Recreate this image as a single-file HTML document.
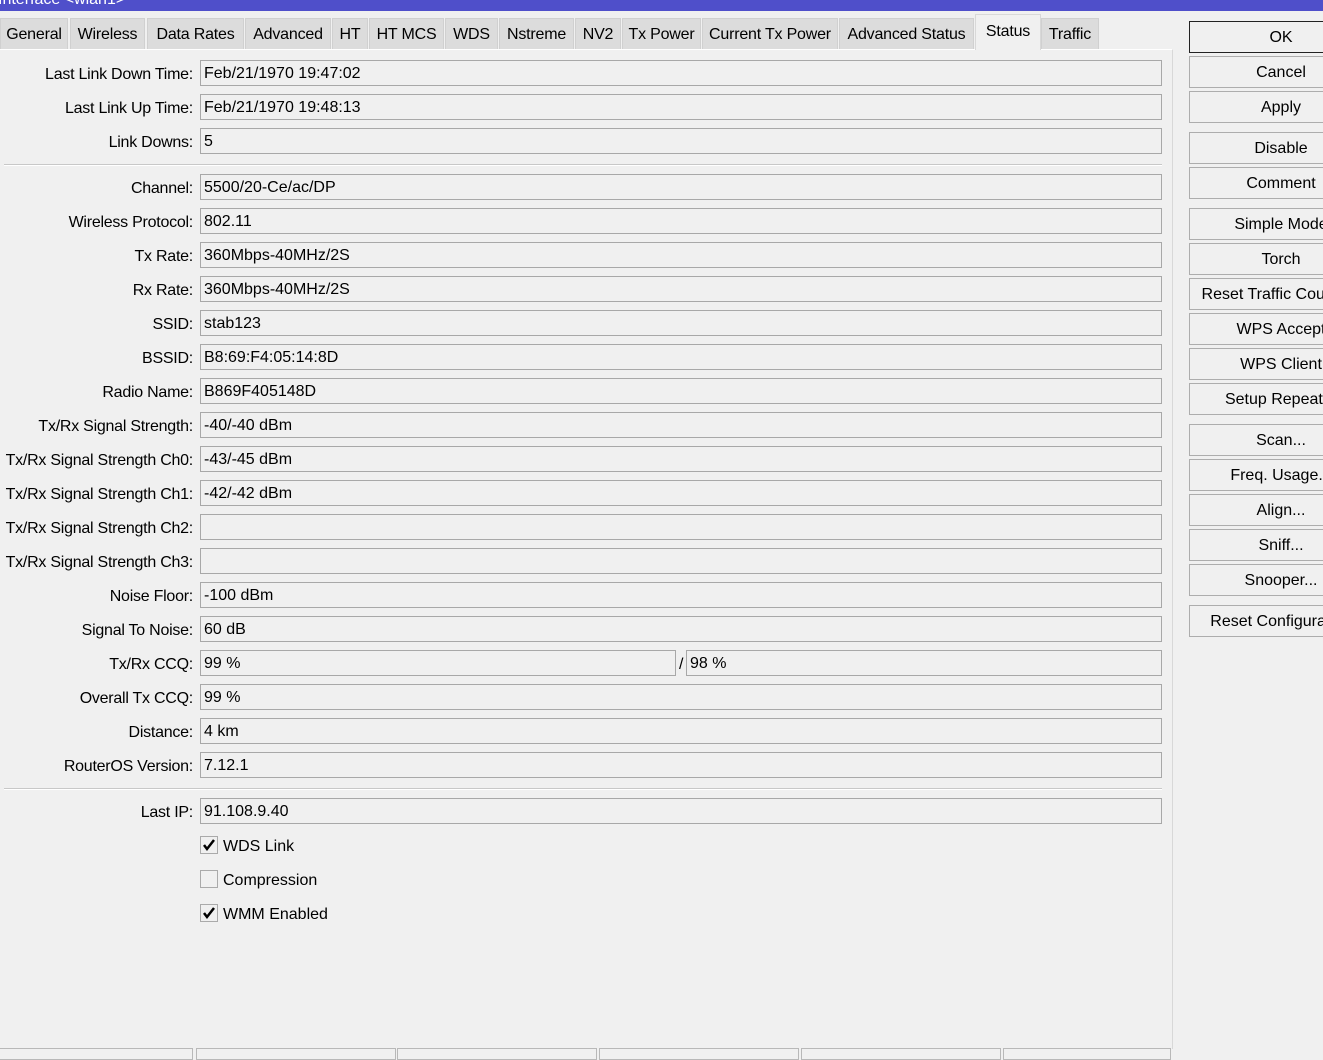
<!DOCTYPE html>
<html><head><style>
*{box-sizing:border-box;margin:0;padding:0}
body{width:1323px;height:1058px;background:#f0f0f0;font-family:"Liberation Sans",Arial,sans-serif;font-size:16px;color:#000;position:relative;overflow:hidden}
.title{position:absolute;left:0;top:0;width:1323px;height:11px;background:#4f4fca;color:#fff;overflow:hidden}
.title span{position:absolute;left:-2px;top:-9px;font-size:16px}
.tab{position:absolute;top:18px;height:31px;background:#dcdcdc;border:1px solid #d0d0d0;border-bottom:none;padding-top:7px;text-align:center;white-space:nowrap;letter-spacing:-0.2px}
.tab.sel{top:14px;height:36px;background:#f0f0f0;border-color:#d8d8d8;padding-top:8px}
.panel{position:absolute;left:0;top:49px;width:1173px;height:1000px;border-right:1px solid #d8d8d8;border-top:1px solid #fff}
.lbl{position:absolute;right:1130px;width:200px;text-align:right;white-space:nowrap;letter-spacing:-0.25px;margin-top:1px}
.fld{position:absolute;left:200px;width:962px;height:26px;border:1px solid #a8a8a8;padding:4px 0 0 3px;white-space:nowrap}
.sep{position:absolute;left:4px;width:1158px;height:2px;border-top:1px solid #c8c8c8;border-bottom:1px solid #fff}
.btn{position:absolute;left:1189px;width:184px;height:32px;border:1px solid #adadad;background:#f0f0f0;text-align:center;padding-top:7px;white-space:nowrap}
.btn.ok{border:1px solid #222}
.cb{position:absolute;left:200px;width:18px;height:18px;border:1px solid #aaa;background:#f0f0f0}
.cbl{position:absolute;left:223px;margin-top:1px}
.status{position:absolute;top:1048px;height:12px;border:1px solid #b8b8b8}
</style></head><body>
<div class="title"><span>Interface &lt;wlan1&gt;</span></div>
<div class="panel"></div>
<div class="tab" style="left:0;width:68px">General</div>
<div class="tab" style="left:70px;width:75px">Wireless</div>
<div class="tab" style="left:147px;width:97px">Data Rates</div>
<div class="tab" style="left:245px;width:86px">Advanced</div>
<div class="tab" style="left:332px;width:36px">HT</div>
<div class="tab" style="left:369px;width:75px">HT MCS</div>
<div class="tab" style="left:445px;width:53px">WDS</div>
<div class="tab" style="left:499px;width:75px">Nstreme</div>
<div class="tab" style="left:575px;width:46px">NV2</div>
<div class="tab" style="left:622px;width:79px">Tx Power</div>
<div class="tab" style="left:702px;width:136px">Current Tx Power</div>
<div class="tab" style="left:839px;width:135px">Advanced Status</div>
<div class="tab sel" style="left:975px;width:66px">Status</div>
<div class="tab" style="left:1041px;width:58px">Traffic</div>

<div class="lbl" style="top:65px">Last Link Down Time:</div><div class="fld" style="top:60px">Feb/21/1970 19:47:02</div>
<div class="lbl" style="top:99px">Last Link Up Time:</div><div class="fld" style="top:94px">Feb/21/1970 19:48:13</div>
<div class="lbl" style="top:133px">Link Downs:</div><div class="fld" style="top:128px">5</div>
<div class="sep" style="top:164px"></div>
<div class="lbl" style="top:179px">Channel:</div><div class="fld" style="top:174px">5500/20-Ce/ac/DP</div>
<div class="lbl" style="top:213px">Wireless Protocol:</div><div class="fld" style="top:208px">802.11</div>
<div class="lbl" style="top:247px">Tx Rate:</div><div class="fld" style="top:242px">360Mbps-40MHz/2S</div>
<div class="lbl" style="top:281px">Rx Rate:</div><div class="fld" style="top:276px">360Mbps-40MHz/2S</div>
<div class="lbl" style="top:315px">SSID:</div><div class="fld" style="top:310px">stab123</div>
<div class="lbl" style="top:349px">BSSID:</div><div class="fld" style="top:344px">B8:69:F4:05:14:8D</div>
<div class="lbl" style="top:383px">Radio Name:</div><div class="fld" style="top:378px">B869F405148D</div>
<div class="lbl" style="top:417px">Tx/Rx Signal Strength:</div><div class="fld" style="top:412px">-40/-40 dBm</div>
<div class="lbl" style="top:451px">Tx/Rx Signal Strength Ch0:</div><div class="fld" style="top:446px">-43/-45 dBm</div>
<div class="lbl" style="top:485px">Tx/Rx Signal Strength Ch1:</div><div class="fld" style="top:480px">-42/-42 dBm</div>
<div class="lbl" style="top:519px">Tx/Rx Signal Strength Ch2:</div><div class="fld" style="top:514px"></div>
<div class="lbl" style="top:553px">Tx/Rx Signal Strength Ch3:</div><div class="fld" style="top:548px"></div>
<div class="lbl" style="top:587px">Noise Floor:</div><div class="fld" style="top:582px">-100 dBm</div>
<div class="lbl" style="top:621px">Signal To Noise:</div><div class="fld" style="top:616px">60 dB</div>
<div class="lbl" style="top:655px">Tx/Rx CCQ:</div><div class="fld" style="top:650px;width:476px">99 %</div>
<div style="position:absolute;left:679px;top:656px">/</div><div class="fld" style="top:650px;left:686px;width:476px">98 %</div>
<div class="lbl" style="top:689px">Overall Tx CCQ:</div><div class="fld" style="top:684px">99 %</div>
<div class="lbl" style="top:723px">Distance:</div><div class="fld" style="top:718px">4 km</div>
<div class="lbl" style="top:757px">RouterOS Version:</div><div class="fld" style="top:752px">7.12.1</div>
<div class="sep" style="top:788px"></div>
<div class="lbl" style="top:803px">Last IP:</div><div class="fld" style="top:798px">91.108.9.40</div>

<div class="cb" style="top:836px"><svg width="16" height="16"><path d="M3 8 L6 12 L13 3" stroke="#000" stroke-width="2.5" fill="none"/></svg></div><div class="cbl" style="top:837px">WDS Link</div>
<div class="cb" style="top:870px"></div><div class="cbl" style="top:871px">Compression</div>
<div class="cb" style="top:904px"><svg width="16" height="16"><path d="M3 8 L6 12 L13 3" stroke="#000" stroke-width="2.5" fill="none"/></svg></div><div class="cbl" style="top:905px">WMM Enabled</div>

<div class="btn ok" style="top:21px">OK</div>
<div class="btn" style="top:56px">Cancel</div>
<div class="btn" style="top:91px">Apply</div>
<div class="btn" style="top:132px">Disable</div>
<div class="btn" style="top:167px">Comment</div>
<div class="btn" style="top:208px">Simple Mode</div>
<div class="btn" style="top:243px">Torch</div>
<div class="btn" style="top:278px">Reset Traffic Counters</div>
<div class="btn" style="top:313px">WPS Accept</div>
<div class="btn" style="top:348px">WPS Client</div>
<div class="btn" style="top:383px">Setup Repeater</div>
<div class="btn" style="top:424px">Scan...</div>
<div class="btn" style="top:459px">Freq. Usage...</div>
<div class="btn" style="top:494px">Align...</div>
<div class="btn" style="top:529px">Sniff...</div>
<div class="btn" style="top:564px">Snooper...</div>
<div class="btn" style="top:605px">Reset Configuration</div>

<div class="status" style="left:-1px;width:194px"></div>
<div class="status" style="left:196px;width:200px"></div>
<div class="status" style="left:397px;width:200px"></div>
<div class="status" style="left:599px;width:200px"></div>
<div class="status" style="left:801px;width:200px"></div>
<div class="status" style="left:1003px;width:168px"></div>
</body></html>
